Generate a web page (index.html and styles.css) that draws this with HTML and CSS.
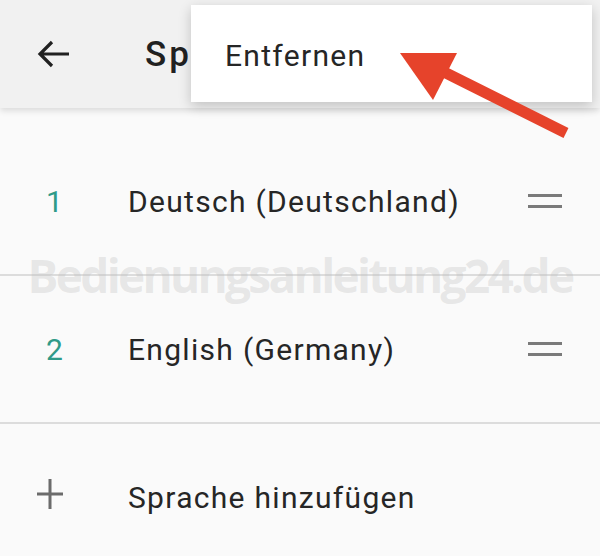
FILE: index.html
```html
<!DOCTYPE html>
<html>

<head>
  <meta charset="utf-8">
  <meta name="viewport" content="width=device-width, initial-scale=1">
  <title>Sprachen</title>
  <link rel="stylesheet" href="styles.css">
</head>

<body>
  <div class="bar">
    <svg class="back" width="34" height="30" viewBox="0 0 34 30">
      <path d="M32 15 H3 M15 3 L3 15 L15 27" fill="none" stroke="#212121" stroke-width="3.2" stroke-linejoin="miter"/>
    </svg>
    <h1 class="title">Sprachen</h1>
  </div>

  <div class="list">
    <div class="row">
      <span class="num">1</span>
      <span class="label">Deutsch (Deutschland)</span>
      <span class="handle"></span>
    </div>
    <div class="row">
      <span class="num">2</span>
      <span class="label">English (Germany)</span>
      <span class="handle"></span>
    </div>
    <div class="row add">
      <span class="num">
        <svg width="26" height="30" viewBox="0 0 26 30">
          <path d="M13 0 V30 M0 15 H26" stroke="#6b6b6b" stroke-width="3"/>
        </svg>
      </span>
      <span class="label">Sprache hinzufügen</span>
    </div>
  </div>

  <div class="watermark">Bedienungsanleitung24.de</div>

  <div class="menu">
    <div class="item">Entfernen</div>
  </div>

  <svg class="pointer" width="600" height="160" viewBox="0 0 600 160">
    <line x1="566" y1="133" x2="440" y2="70" stroke="#e6432b" stroke-width="11"/>
    <polygon points="400,53 457,53 433,100" fill="#e6432b"/>
  </svg>
</body>

</html>
```

FILE: styles.css
```css
body {
  margin: 0;
  background: #fafafa;
  font-family: Roboto, "Noto Sans", sans-serif;
  color: #222;
  width: 600px;
  height: 556px;
  overflow: hidden;
  position: relative;
}

.bar {
  height: 108px;
  background: #f1f1f1;
  display: flex;
  align-items: center;
  padding-left: 37px;
  box-shadow: 0 3px 6px rgba(0, 0, 0, 0.12);
}

.back {
  margin-right: 74px;
}

/* title runs under the popup menu, only "Sp" shows */
.title {
  margin: 0;
  width: 46px;
  overflow: hidden;
  white-space: nowrap;
  font-size: 35px;
  font-weight: 500;
  letter-spacing: 3px;
  color: #212121;
}

.list {
  padding-top: 20px;
}

.row {
  height: 146px;
  display: flex;
  align-items: center;
  border-bottom: 2px solid #dcdcdc;
  padding-right: 38px;
}

.row.add {
  border-bottom: none;
}

.num {
  width: 128px;
  padding-left: 46px;
  box-sizing: border-box;
  font-size: 30px;
  color: #2f9a88;
}

.row.add .num {
  padding-left: 37px;
}

.label {
  flex: 1;
  font-size: 30px;
  letter-spacing: 1.3px;
  color: #262626;
}

.handle {
  width: 34px;
  height: 14px;
  border-top: 3px solid #7a7a7a;
  border-bottom: 3px solid #7a7a7a;
  box-sizing: border-box;
}

.watermark {
  position: absolute;
  left: 0;
  right: 0;
  top: 244px;
  text-align: center;
  font-family: "Open Sans", sans-serif;
  font-weight: 700;
  font-size: 46px;
  letter-spacing: -2.7px;
  color: rgba(190, 190, 190, 0.32);
}

.menu {
  position: absolute;
  left: 191px;
  top: 5px;
  width: 401px;
  height: 97px;
  background: #fff;
  box-shadow: 0 4px 12px rgba(0, 0, 0, 0.2);
  display: flex;
  align-items: center;
}

.item {
  padding-left: 34px;
  padding-top: 3px;
  font-size: 30px;
  letter-spacing: 1.3px;
  color: #262626;
}

.pointer {
  position: absolute;
  left: 0;
  top: 0;
}
```
